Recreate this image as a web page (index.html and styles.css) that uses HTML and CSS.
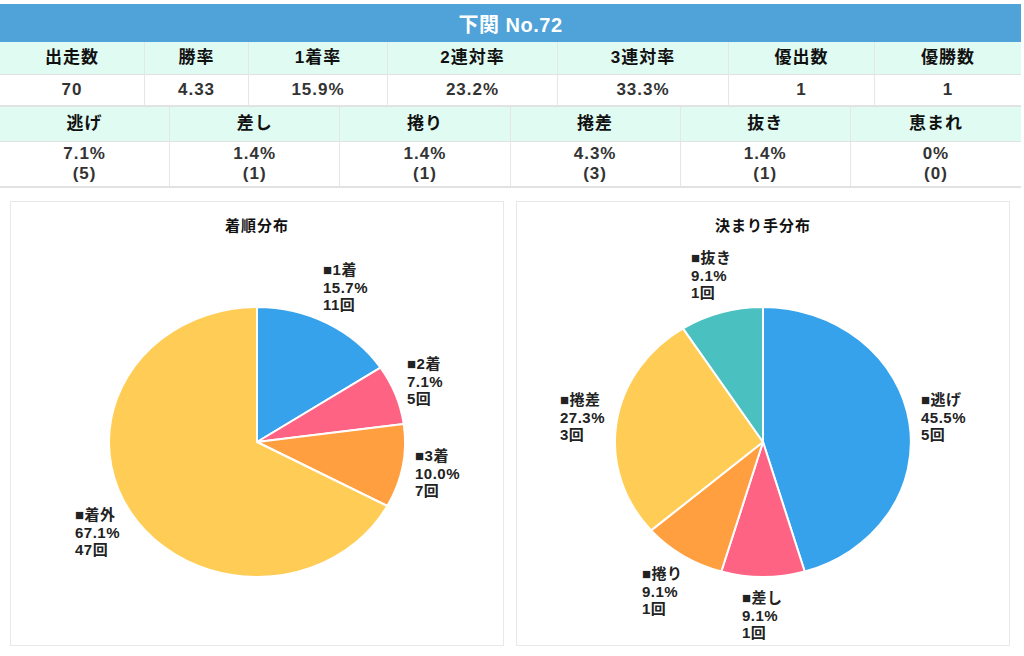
FILE: index.html
```html
<!DOCTYPE html>
<html lang="ja">
<head>
<meta charset="utf-8">
<title>下関 No.72</title>
<link rel="stylesheet" href="styles.css">
</head>
<body>
<div class="stats">
  <div class="title-bar">下関 No.72</div>
  <div class="row row-7 r1">
    <div class="cell head">出走数</div>
    <div class="cell head">勝率</div>
    <div class="cell head">1着率</div>
    <div class="cell head">2連対率</div>
    <div class="cell head">3連対率</div>
    <div class="cell head">優出数</div>
    <div class="cell head">優勝数</div>
  </div>
  <div class="row row-7 r2">
    <div class="cell val">70</div>
    <div class="cell val">4.33</div>
    <div class="cell val">15.9%</div>
    <div class="cell val">23.2%</div>
    <div class="cell val">33.3%</div>
    <div class="cell val">1</div>
    <div class="cell val">1</div>
  </div>
  <div class="row row-6 r3">
    <div class="cell head">逃げ</div>
    <div class="cell head">差し</div>
    <div class="cell head">捲り</div>
    <div class="cell head">捲差</div>
    <div class="cell head">抜き</div>
    <div class="cell head">恵まれ</div>
  </div>
  <div class="row row-6 r4">
    <div class="cell val"><span>7.1%</span><span>(5)</span></div>
    <div class="cell val"><span>1.4%</span><span>(1)</span></div>
    <div class="cell val"><span>1.4%</span><span>(1)</span></div>
    <div class="cell val"><span>4.3%</span><span>(3)</span></div>
    <div class="cell val"><span>1.4%</span><span>(1)</span></div>
    <div class="cell val"><span>0%</span><span>(0)</span></div>
  </div>
</div>

<div class="charts">
  <div class="card">
    <div class="card-title">着順分布</div>
    <svg class="pie" width="492" height="400" viewBox="0 0 492 400">
      <g stroke="#fff" stroke-width="2" stroke-linejoin="round">
        <path fill="#36a2eb" d="M246,197 L246,62 A148,135 0 0 1 369.5,122.6 Z"/>
        <path fill="#ff6384" d="M246,197 L369.5,122.6 A148,135 0 0 1 392.7,178.9 Z"/>
        <path fill="#ff9f40" d="M246,197 L392.7,178.9 A148,135 0 0 1 376.3,261 Z"/>
        <path fill="#ffcd56" d="M246,197 L376.3,261 A148,135 0 1 1 246,62 Z"/>
      </g>
      <text class="lbl" x="312" y="30"><tspan x="312">■1着</tspan><tspan x="312" dy="17.5">15.7%</tspan><tspan x="312" dy="17.5">11回</tspan></text>
      <text class="lbl" x="396" y="124"><tspan x="396">■2着</tspan><tspan x="396" dy="17.5">7.1%</tspan><tspan x="396" dy="17.5">5回</tspan></text>
      <text class="lbl" x="404" y="216"><tspan x="404">■3着</tspan><tspan x="404" dy="17.5">10.0%</tspan><tspan x="404" dy="17.5">7回</tspan></text>
      <text class="lbl" x="64" y="275"><tspan x="64">■着外</tspan><tspan x="64" dy="17.5">67.1%</tspan><tspan x="64" dy="17.5">47回</tspan></text>
    </svg>
  </div>
  <div class="card">
    <div class="card-title">決まり手分布</div>
    <svg class="pie" width="492" height="400" viewBox="0 0 492 400">
      <g stroke="#fff" stroke-width="2" stroke-linejoin="round">
        <path fill="#36a2eb" d="M246,197 L246,62 A148,135 0 0 1 287.7,326.5 Z"/>
        <path fill="#ff6384" d="M246,197 L287.7,326.5 A148,135 0 0 1 204.3,326.5 Z"/>
        <path fill="#ff9f40" d="M246,197 L204.3,326.5 A148,135 0 0 1 134.1,285.4 Z"/>
        <path fill="#ffcd56" d="M246,197 L134.1,285.4 A148,135 0 0 1 166,83.4 Z"/>
        <path fill="#4bc0c0" d="M246,197 L166,83.4 A148,135 0 0 1 246,62 Z"/>
      </g>
      <text class="lbl" x="174" y="18"><tspan x="174">■抜き</tspan><tspan x="174" dy="17.5">9.1%</tspan><tspan x="174" dy="17.5">1回</tspan></text>
      <text class="lbl" x="404" y="160"><tspan x="404">■逃げ</tspan><tspan x="404" dy="17.5">45.5%</tspan><tspan x="404" dy="17.5">5回</tspan></text>
      <text class="lbl" x="43" y="160"><tspan x="43">■捲差</tspan><tspan x="43" dy="17.5">27.3%</tspan><tspan x="43" dy="17.5">3回</tspan></text>
      <text class="lbl" x="125" y="334"><tspan x="125">■捲り</tspan><tspan x="125" dy="17.5">9.1%</tspan><tspan x="125" dy="17.5">1回</tspan></text>
      <text class="lbl" x="225" y="358"><tspan x="225">■差し</tspan><tspan x="225" dy="17.5">9.1%</tspan><tspan x="225" dy="17.5">1回</tspan></text>
    </svg>
  </div>
</div>
</body>
</html>
```

FILE: styles.css
```css
* { box-sizing: border-box; }

body {
  margin: 0;
  background: #ffffff;
  color: #222222;
  font-family: "Liberation Sans", "Noto Sans CJK JP", sans-serif;
}

.stats {
  width: 1021px;
  margin-top: 4px;
}

.title-bar {
  height: 38px;
  background: #4fa3d8;
  color: #ffffff;
  font-weight: bold;
  font-size: 20px;
  letter-spacing: 0.5px;
  display: flex;
  align-items: center;
  justify-content: center;
}

.row {
  display: grid;
  border-bottom: 1px solid #e2e2e2;
}

.row-7 {
  grid-template-columns: 145px 104px 139px 170px 171px 146px 146px;
}

.row-6 {
  grid-template-columns: repeat(6, 1fr);
}

.r1 { height: 33px; }
.r2 { height: 32px; border-bottom: 2px solid #e2e2e2; }
.r3 { height: 35px; }
.r4 { height: 46px; border-bottom: 2px solid #e2e2e2; }

.cell {
  display: flex;
  flex-direction: column;
  align-items: center;
  justify-content: center;
  border-right: 1px solid #e6e6e6;
  font-weight: bold;
  font-size: 17px;
  letter-spacing: 1px;
  line-height: 20px;
}

.cell:last-child {
  border-right: none;
}

.head {
  background: #e0fbf2;
  color: #111111;
}

.val {
  background: #ffffff;
  color: #333333;
}

.charts {
  display: flex;
  gap: 12px;
  padding: 13px 0 0 10px;
}

.card {
  width: 494px;
  height: 445px;
  border: 1px solid #e8e8e8;
  background: #ffffff;
}

.card-title {
  height: 43px;
  padding-top: 14px;
  text-align: center;
  font-size: 15px;
  font-weight: bold;
  letter-spacing: 1px;
  line-height: 20px;
  color: #111111;
}

.pie {
  display: block;
}

.lbl {
  font-family: "Liberation Sans", "Noto Sans CJK JP", sans-serif;
  font-size: 15px;
  font-weight: bold;
  letter-spacing: 0.5px;
  fill: #222222;
}
```
